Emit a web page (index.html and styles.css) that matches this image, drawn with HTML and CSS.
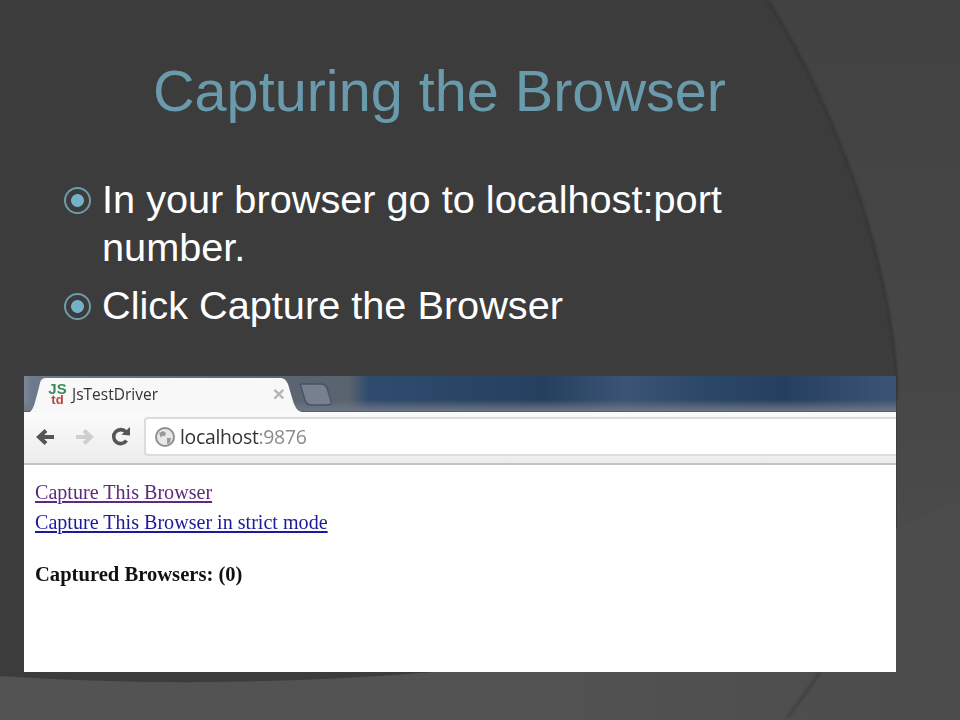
FILE: index.html
```html
<!DOCTYPE html>
<html lang="en">
<head>
<meta charset="utf-8">
<title>Capturing the Browser</title>
<link rel="stylesheet" href="styles.css">
</head>
<body>
<main class="slide">
  <svg class="backdrop" viewBox="0 0 960 720" width="960" height="720" aria-hidden="true">
    <defs>
      <linearGradient id="outer" x1="0" y1="0" x2="0" y2="1">
        <stop offset="0" stop-color="#424242"/>
        <stop offset="0.55" stop-color="#474747"/>
        <stop offset="1" stop-color="#505050"/>
      </linearGradient>
      <linearGradient id="floor" x1="0" y1="0" x2="1" y2="0">
        <stop offset="0" stop-color="#535353"/>
        <stop offset="0.6" stop-color="#525252"/>
        <stop offset="1" stop-color="#4b4b4b"/>
      </linearGradient>
      <filter id="soft" x="-5%" y="-5%" width="110%" height="110%"><feGaussianBlur stdDeviation="1.2"/></filter>
    </defs>
    <rect width="960" height="720" fill="url(#outer)"/>
    <path d="M0 676 Q210 690 434 672 L600 610 L896 528 L960 500 V720 H0Z" fill="url(#floor)"/>
    <path d="M0 0 H768 C835 110 885 240 897 376 V528 L434 672 Q210 690 0 676Z" fill="#3c3c3c"/>
    <path d="M768 0 C835 110 885 240 897 376 V400" fill="none" stroke="#333" stroke-width="2" filter="url(#soft)"/>
    <path d="M820 672 Q805 695 787 718" fill="none" stroke="#3d3d3d" stroke-width="2" filter="url(#soft)"/>
  </svg>

  <h1 class="title">Capturing the Browser</h1>

  <ul class="points">
    <li class="point">In your browser go to localhost:port number.</li>
    <li class="point">Click Capture the Browser</li>
  </ul>

  <figure class="shot">
    <div class="tabstrip">
      <svg class="tabshape" width="320" height="36" viewBox="0 0 320 36" aria-hidden="true">
        <path d="M6 36 C10 32 11 26 13 19 L16 7 C17 3 19 2 23 2 H256 C260 2 262 4 264 8 L269 25 C271 31 273 35 278 36Z" fill="#f8f8f8"/>
        <path d="M278 8 H297 C300 8 302 10 303 12 L307 25 C308 28 306 29 303 29 H288 C284 29 282 27 281 24 L277 11 C276 9 276 8 278 8Z" fill="#77808f" stroke="#47546a" stroke-width="1.5"/>
      </svg>
      <div class="tab">
        <span class="favicon"><span class="fav-js">JS</span><span class="fav-td">td</span></span>
        <span class="tab-title">JsTestDriver</span>
        <span class="tab-close">×</span>
      </div>
    </div>
    <div class="toolbar">
      <svg class="nav" width="22" height="20" viewBox="0 0 22 20" aria-hidden="true"><path d="M20 10H6M12 3.5 5 10l7 6.5" fill="none" stroke="#555" stroke-width="4"/></svg>
      <svg class="nav" width="22" height="20" viewBox="0 0 22 20" aria-hidden="true"><path d="M2 10h14M10 3.5l7 6.5-7 6.5" fill="none" stroke="#cfcfcf" stroke-width="4"/></svg>
      <svg class="nav" width="22" height="22" viewBox="0 0 22 22" aria-hidden="true"><path d="M16.5 14.5A7 7 0 1 1 16 6" fill="none" stroke="#555" stroke-width="3.6"/><path d="M11.5 8.8 20 9.5V1Z" fill="#555"/></svg>
      <div class="address">
        <svg width="22" height="22" viewBox="0 0 22 22" aria-hidden="true"><circle cx="11" cy="11" r="9" fill="#e8e8e8" stroke="#8f8f8f" stroke-width="2"/><path d="M5 7l4-2 3 2-1 3-3 0-1 2zM13 12l4 0-1 5-3 1z" fill="#9a9a9a"/></svg>
        <span class="url"><span class="host">localhost</span>:9876</span>
      </div>
    </div>
    <div class="page">
      <a class="link visited" href="#">Capture This Browser</a>
      <a class="link" href="#">Capture This Browser in strict mode</a>
      <p class="captured">Captured Browsers: (0)</p>
    </div>
  </figure>
</main>
</body>
</html>
```
FILE: styles.css
```css
* { box-sizing: border-box; }
html, body { margin: 0; padding: 0; }
body { background: #3c3c3c; }

.slide {
  position: relative;
  width: 960px;
  height: 720px;
  overflow: hidden;
  font-family: "Liberation Sans", Arial, sans-serif;
  padding-top: 58px;
}
.backdrop { position: absolute; left: 0; top: 0; }

.title {
  position: relative;
  margin: 0;
  width: 879px;
  text-align: center;
  font-size: 57.6px;
  line-height: 66px;
  font-weight: 400;
  color: #6a9bad;
}

.points {
  position: relative;
  list-style: none;
  margin: 51px 0 0;
  padding: 0 200px 0 102px;
  color: #fff;
  font-size: 39.7px;
  line-height: 48px;
}
.point { position: relative; margin-bottom: 10px; }
.point::before {
  content: "";
  position: absolute;
  left: -38px;
  top: 12px;
  width: 23px;
  height: 23px;
  border-radius: 50%;
  border: 2px solid #6c9dac;
  background: radial-gradient(circle, #74b2c9 0 6px, #3c3c3c 6.8px);
}

.shot {
  position: absolute;
  left: 24px;
  top: 376px;
  width: 872px;
  height: 296px;
  margin: 0;
  background: #fff;
  overflow: hidden;
  filter: blur(0.4px);
}

.tabstrip {
  position: relative;
  height: 36px;
  background:
    linear-gradient(180deg, rgba(40,60,90,0) 0 68%, #6d7684 100%),
    linear-gradient(90deg, #7d8797 0, #6d7a8c 8px, #5a6470 290px, #59636e 325px, #2f4b6e 345px, #25405f 520px, #3b5475 600px, #2c4868 680px, #253f60 760px, #3a5375 860px);
  border-bottom: 1px solid #555d68;
}
.tabshape { position: absolute; left: 0; top: 0; }
.tab {
  position: relative;
  display: flex;
  align-items: center;
  height: 36px;
  padding-left: 23px;
  width: 261px;
}
.favicon {
  display: flex;
  flex-direction: column;
  width: 21px;
  margin-right: 4px;
  font-weight: 700;
  text-align: center;
}
.fav-js { color: #3f8a5a; font-size: 15px; line-height: 12px; }
.fav-td { color: #b5453f; font-size: 13px; line-height: 10px; }
.tab-title {
  flex: 1;
  font-family: "Open Sans", sans-serif;
  font-size: 15.5px;
  color: #333;
}
.tab-close { color: #b5b5b5; font-size: 21px; font-weight: 700; }

.toolbar {
  display: flex;
  align-items: center;
  gap: 18px;
  height: 53px;
  padding: 0 0 2px 10px;
  background: linear-gradient(180deg, #fbfbfb, #ececec);
  border-bottom: 2px solid #c4c4c4;
}
.nav { flex: none; }
.nav + .nav + .nav { margin-left: -4px; }
.address {
  flex: 1;
  display: flex;
  align-items: center;
  gap: 4px;
  height: 39px;
  margin-left: -6px;
  padding-left: 8px;
  background: #fff;
  border: 2px solid #dcdcdc;
  border-right: 0;
  border-radius: 4px 0 0 4px;
}
.url {
  font-family: "Open Sans", sans-serif;
  font-size: 19.4px;
  letter-spacing: -0.3px;
  color: #8b8b8b;
}
.host { color: #333; }

.page {
  padding: 12px 0 0 11px;
  font-family: "Liberation Serif", "Times New Roman", serif;
  font-size: 20.1px;
  line-height: 30px;
}
.link { display: block; color: #1c1a9c; }
.visited { color: #5c2a7e; }
.captured {
  margin: 22px 0 0;
  font-size: 20.6px;
  font-weight: 700;
  color: #111;
}
```
